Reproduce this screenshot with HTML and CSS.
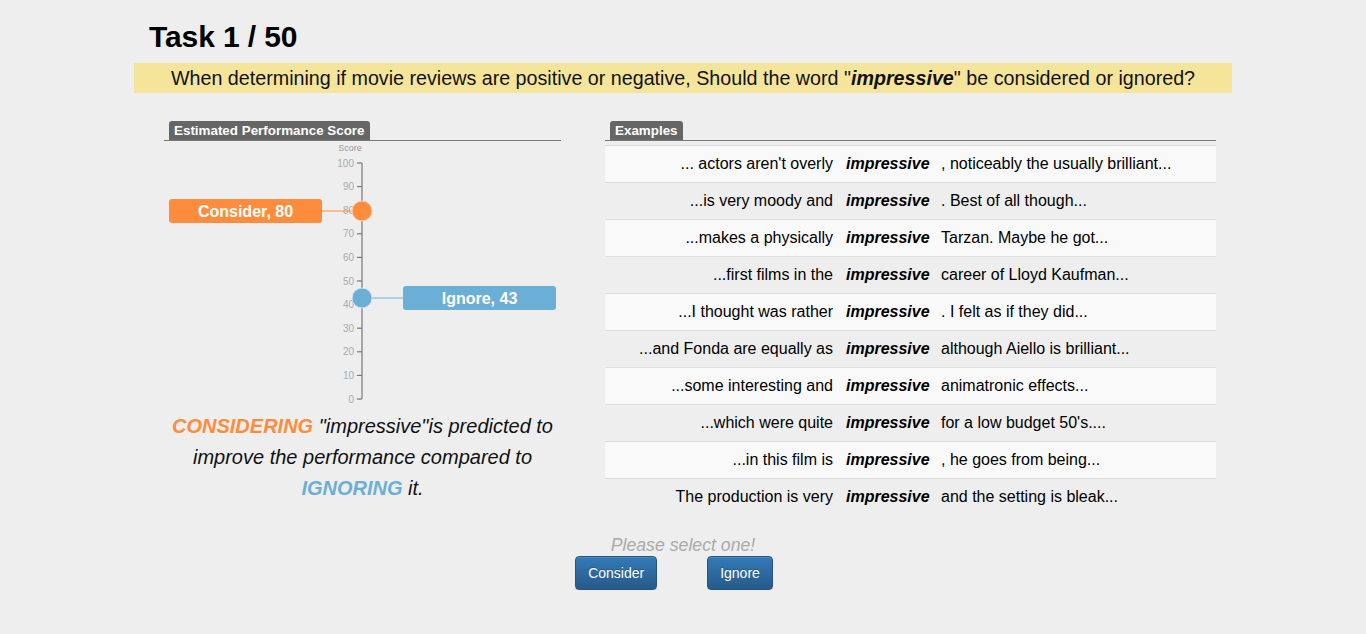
FILE: index.html
```html
<!DOCTYPE html>
<html>
<head>
<meta charset="utf-8">
<link rel="stylesheet" href="styles.css">
</head>
<body>
<div class="page">
  <h1 class="title">Task 1 / 50</h1>
  <div class="question">When determining if movie reviews are positive or negative, Should the word "<b><i>impressive</i></b>" be considered or ignored?</div>
  <div class="panels">
    <div class="left">
      <div class="tabline"><span class="tab">Estimated Performance Score</span></div>
      <svg class="chart" width="397" height="265" viewBox="0 0 397 265">
        <text class="axis-title" x="186" y="9.5" text-anchor="middle">Score</text>
        <line class="axis" x1="198" y1="22" x2="198" y2="258"/>
        <g class="ticks">
          <line x1="193" y1="22" x2="198" y2="22"/>
          <line x1="193" y1="45.6" x2="198" y2="45.6"/>
          <line x1="193" y1="69.2" x2="198" y2="69.2"/>
          <line x1="193" y1="92.8" x2="198" y2="92.8"/>
          <line x1="193" y1="116.4" x2="198" y2="116.4"/>
          <line x1="193" y1="140" x2="198" y2="140"/>
          <line x1="193" y1="163.6" x2="198" y2="163.6"/>
          <line x1="193" y1="187.2" x2="198" y2="187.2"/>
          <line x1="193" y1="210.8" x2="198" y2="210.8"/>
          <line x1="193" y1="234.4" x2="198" y2="234.4"/>
          <line x1="193" y1="258" x2="198" y2="258"/>
        </g>
        <g class="tick-labels" text-anchor="end">
          <text x="190" y="25.5">100</text>
          <text x="190" y="49.1">90</text>
          <text x="190" y="72.7">80</text>
          <text x="190" y="96.3">70</text>
          <text x="190" y="119.9">60</text>
          <text x="190" y="143.5">50</text>
          <text x="190" y="167.1">40</text>
          <text x="190" y="190.7">30</text>
          <text x="190" y="214.3">20</text>
          <text x="190" y="237.9">10</text>
          <text x="190" y="261.5">0</text>
        </g>
        <line class="link-orange" x1="158" y1="70" x2="198" y2="70"/>
        <rect class="box-orange" x="5" y="58" width="153" height="24" rx="3"/>
        <text class="box-text" x="81.5" y="75.5" text-anchor="middle">Consider, 80</text>
        <circle class="dot-orange" cx="198" cy="70" r="10"/>
        <line class="link-blue" x1="198" y1="157" x2="239" y2="157"/>
        <rect class="box-blue" x="239" y="145" width="153" height="24" rx="3"/>
        <text class="box-text" x="315.5" y="162.5" text-anchor="middle">Ignore, 43</text>
        <circle class="dot-blue" cx="198" cy="157" r="10"/>
      </svg>
      <p class="caption"><b class="c-orange">CONSIDERING</b> "impressive"is predicted to<br>improve the performance compared to<br><b class="c-blue">IGNORING</b> it.</p>
    </div>
    <div class="right">
      <div class="tabline"><span class="tab">Examples</span></div>
      <table class="examples">
        <tr><td class="pre">... actors aren't overly</td><td class="word">impressive</td><td class="post">, noticeably the usually brilliant...</td></tr>
        <tr><td class="pre">...is very moody and</td><td class="word">impressive</td><td class="post">. Best of all though...</td></tr>
        <tr><td class="pre">...makes a physically</td><td class="word">impressive</td><td class="post">Tarzan. Maybe he got...</td></tr>
        <tr><td class="pre">...first films in the</td><td class="word">impressive</td><td class="post">career of Lloyd Kaufman...</td></tr>
        <tr><td class="pre">...I thought was rather</td><td class="word">impressive</td><td class="post">. I felt as if they did...</td></tr>
        <tr><td class="pre">...and Fonda are equally as</td><td class="word">impressive</td><td class="post">although Aiello is brilliant...</td></tr>
        <tr><td class="pre">...some interesting and</td><td class="word">impressive</td><td class="post">animatronic effects...</td></tr>
        <tr><td class="pre">...which were quite</td><td class="word">impressive</td><td class="post">for a low budget 50's....</td></tr>
        <tr><td class="pre">...in this film is</td><td class="word">impressive</td><td class="post">, he goes from being...</td></tr>
        <tr><td class="pre">The production is very</td><td class="word">impressive</td><td class="post">and the setting is bleak...</td></tr>
      </table>
    </div>
  </div>
  <p class="prompt">Please select one!</p>
  <div class="actions">
    <button class="btn">Consider</button>
    <button class="btn">Ignore</button>
  </div>
</div>
</body>
</html>
```

FILE: styles.css
```css
html, body {
  margin: 0;
  padding: 0;
  background: #eeeeee;
}
body {
  font-family: "Liberation Sans", Arial, Helvetica, sans-serif;
  color: #000;
}
.page {
  width: 1098px;
  margin: 0 auto;
}
.title {
  margin: 19px 0 0 0;
  padding-left: 15px;
  font-size: 30px;
  line-height: 36px;
  font-weight: bold;
  letter-spacing: -0.1px;
}
.question {
  margin-top: 8px;
  height: 30px;
  line-height: 30px;
  background: #f5e59b;
  text-align: center;
  font-size: 19.7px;
  color: #111;
  white-space: nowrap;
}
.question b {
  font-weight: bold;
}
.panels {
  display: flex;
  margin-top: 28px;
  padding-left: 30px;
  gap: 44px;
}
.left {
  width: 397px;
  flex: none;
}
.right {
  width: 611px;
  flex: none;
}
.tabline {
  border-bottom: 1px solid #777;
  padding-left: 5px;
  height: 19px;
}
.tab {
  display: inline-block;
  height: 19px;
  line-height: 19px;
  padding: 0 5px;
  background: #666;
  color: #fff;
  font-size: 13.4px;
  font-weight: bold;
  border-radius: 3px 3px 0 0;
  vertical-align: top;
}
.chart {
  display: block;
}
.axis-title {
  font-size: 9px;
  fill: #999;
}
.axis, .ticks line {
  stroke: #777;
  stroke-width: 1.2;
}
.tick-labels text {
  font-size: 10px;
  fill: #aaa;
}
.link-orange { stroke: #fd8d3c; stroke-width: 1.2; }
.link-blue { stroke: #6baed6; stroke-width: 1.2; }
.box-orange { fill: #fd8d3c; }
.box-blue { fill: #6baed6; }
.dot-orange { fill: #fd8d3c; stroke: #fbd0b0; stroke-width: 1; }
.dot-blue { fill: #6baed6; stroke: #cfe3f0; stroke-width: 1; }
.box-text {
  font-size: 16px;
  font-weight: bold;
  fill: #fff;
}
.caption {
  margin: 5px 0 0 0;
  text-align: center;
  font-size: 20px;
  line-height: 31px;
  font-style: italic;
  color: #111;
  white-space: nowrap;
}
.c-orange { color: #fd8d3c; }
.c-blue { color: #6baed6; }
.examples {
  margin-top: 4px;
  width: 611px;
  border-collapse: collapse;
  font-size: 16px;
  table-layout: fixed;
}
.examples td {
  border-top: 1px solid #dddddd;
  padding: 8px;
  line-height: 20px;
  white-space: nowrap;
}
.examples tr:nth-child(odd) td {
  background: #f9f9f9;
}
.examples td.pre {
  width: 220px;
  padding-right: 5px;
  text-align: right;
}
.word {
  width: 79px;
  font-weight: bold;
  font-style: italic;
}
.post {
  text-align: left;
}
.prompt {
  margin: 20px 0 0 0;
  text-align: center;
  font-size: 17.7px;
  line-height: 20px;
  font-style: italic;
  color: #aaa;
}
.actions {
  display: flex;
  justify-content: center;
  gap: 50px;
  padding-right: 18px;
  margin-top: 1px;
}
.btn {
  font-family: "Liberation Sans", Arial, Helvetica, sans-serif;
  font-size: 14px;
  line-height: 20px;
  padding: 6px 12px;
  color: #fff;
  background-image: linear-gradient(to bottom, #337ab7 0, #265a88 100%);
  border: 1px solid #245580;
  border-radius: 4px;
  text-shadow: 0 -1px 0 rgba(0,0,0,.2);
  box-shadow: inset 0 1px 0 rgba(255,255,255,.15), 0 1px 1px rgba(0,0,0,.075);
}
```
